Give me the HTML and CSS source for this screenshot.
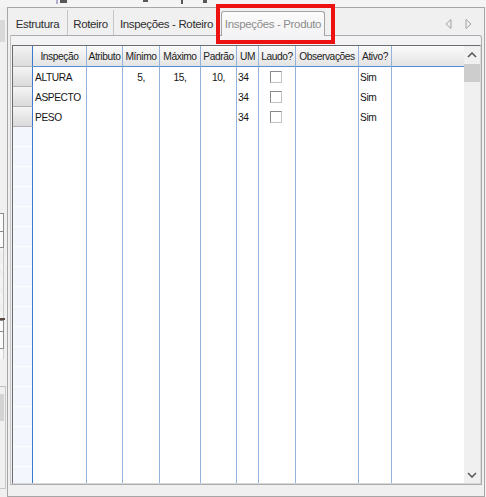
FILE: index.html
```html
<!DOCTYPE html>
<html>
<head>
<meta charset="utf-8">
<link rel="stylesheet" href="styles.css">
</head>
<body>
<div class="screen">
  <div class="topfrag">
    <span class="frag f1"></span>
    <span class="frag f2"></span>
    <span class="frag f3"></span>
    <span class="frag f4"></span>
    <span class="frag f5"></span>
  </div>
  <div class="content">
    <aside class="leftstrip">
      <div class="ls ls-gap13"></div>
      <div class="ls ls-block"></div>
      <div class="ls ls-gap171"></div>
      <div class="ls ls-box ls-h19"></div>
      <div class="ls ls-box ls-h16"></div>
      <div class="ls ls-dots"></div>
      <div class="ls ls-dark"></div>
      <div class="ls ls-box ls-h12"></div>
      <div class="ls ls-box ls-h17"></div>
      <div class="ls ls-light"></div>
      <div class="ls ls-gap27"></div>
      <div class="ls ls-lower">
        <div class="ls-gray"></div>
      </div>
    </aside>
    <div class="frame">
      <div class="tabstrip">
        <div class="tab t1">Estrutura</div>
        <div class="tab t2">Roteiro</div>
        <div class="tab t3">Inspeções - Roteiro</div>
        <div class="tab active">Inspeções - Produto</div>
        <div class="arrows">
          <svg width="7" height="10" viewBox="0 0 7 10"><polygon points="6,0.5 6,9.5 1,5" fill="none" stroke="#a2a2a2" stroke-width="1"/></svg>
          <svg width="7" height="10" viewBox="0 0 7 10"><polygon points="1,0.5 1,9.5 6,5" fill="none" stroke="#a2a2a2" stroke-width="1"/></svg>
        </div>
      </div>
      <div class="tabbody">
        <div class="grid">
          <div class="hcell corner"></div>
          <div class="hcell">Inspeção</div>
          <div class="hcell">Atributo</div>
          <div class="hcell">Mínimo</div>
          <div class="hcell">Máximo</div>
          <div class="hcell">Padrão</div>
          <div class="hcell">UM</div>
          <div class="hcell">Laudo?</div>
          <div class="hcell">Observações</div>
          <div class="hcell">Ativo?</div>
          <div class="hcell hlast"></div>
          <div class="scroll">
            <div class="sbtn up"><svg width="10" height="6" viewBox="0 0 10 6"><polyline points="1,5 5,1 9,5" fill="none" stroke="#5a5a5a" stroke-width="1.6"/></svg></div>
            <div class="thumb"></div>
            <div class="strack"></div>
            <div class="sbtn down"><svg width="10" height="6" viewBox="0 0 10 6"><polyline points="1,1 5,5 9,1" fill="none" stroke="#5a5a5a" stroke-width="1.6"/></svg></div>
          </div>

          <div class="ind"></div>
          <div class="cell first">ALTURA</div>
          <div class="cell"></div>
          <div class="cell num">5,</div>
          <div class="cell num">15,</div>
          <div class="cell num">10,</div>
          <div class="cell">34</div>
          <div class="cell chk"><span class="box"></span></div>
          <div class="cell"></div>
          <div class="cell">Sim</div>
          <div class="cell last"></div>

          <div class="ind"></div>
          <div class="cell first">ASPECTO</div>
          <div class="cell"></div>
          <div class="cell num"></div>
          <div class="cell num"></div>
          <div class="cell num"></div>
          <div class="cell">34</div>
          <div class="cell chk"><span class="box"></span></div>
          <div class="cell"></div>
          <div class="cell">Sim</div>
          <div class="cell last"></div>

          <div class="ind"></div>
          <div class="cell first">PESO</div>
          <div class="cell"></div>
          <div class="cell num"></div>
          <div class="cell num"></div>
          <div class="cell num"></div>
          <div class="cell">34</div>
          <div class="cell chk"><span class="box"></span></div>
          <div class="cell"></div>
          <div class="cell">Sim</div>
          <div class="cell last"></div>

          <div class="ind fill"></div>
          <div class="cell"></div>
          <div class="cell"></div>
          <div class="cell"></div>
          <div class="cell"></div>
          <div class="cell"></div>
          <div class="cell"></div>
          <div class="cell"></div>
          <div class="cell"></div>
          <div class="cell"></div>
          <div class="cell last"></div>
        </div>
      </div>
    </div>
  </div>
  <div class="highlight"></div>
</div>
</body>
</html>
```

FILE: styles.css
```css
* { box-sizing: border-box; }
html, body { margin: 0; padding: 0; }
body {
  width: 486px;
  height: 497px;
  overflow: hidden;
  background: #f0f0f0;
  font-family: "Liberation Sans", Arial, sans-serif;
}
.screen {
  position: relative;
  width: 486px;
  height: 497px;
  background: #f0f0f0;
}

/* top fragments of controls cut by the screenshot */
.topfrag {
  height: 7px;
  display: flex;
  align-items: flex-start;
  background: #f4f4f4;
}
.frag { display: block; height: 3px; background: #575757; }
.f1 { margin-left: 56px; width: 2px; background: #b3acd0; height: 4px; }
.f2 { margin-left: 2px; width: 7px; }
.f3 { margin-left: 76px; width: 5px; height: 2px; }
.f4 { margin-left: 33px; width: 2px; height: 4px; }
.f5 { margin-left: 20px; width: 4px; height: 3px; }

.content { display: flex; height: 490px; }

/* left cut-off controls */
.leftstrip { width: 7px; display: flex; flex-direction: column; }
.ls { flex: none; width: 100%; }
.ls-gap13 { height: 13px; }
.ls-block { height: 22px; width: 5px; background: #d9d9d9; }
.ls-gap171 { height: 171px; }
.ls-box { width: 4px; background: #fbfbfb; border: 1px solid #8c8c8c; border-left: none; }
.ls-h19 { height: 19px; }
.ls-h16 { height: 16px; border-top: none; }
.ls-h12 { height: 12px; }
.ls-h17 { height: 17px; border-top: none; }
.ls-dots {
  height: 70px; width: 4px;
  background: repeating-linear-gradient(45deg, #f7f7f7 0 1px, #ececec 1px 2px);
  border-right: 1px solid #c8c8c8;
}
.ls-dark { height: 2px; width: 5px; background: #5b4a42; }
.ls-light { height: 10px; width: 4px; background: #f8f8f8; border-right: 1px solid #d0d0d0; }
.ls-gap27 { height: 27px; }
.ls-lower {
  height: 103px; width: 6px;
  border-top: 1px solid #c0c0c0;
  border-right: 1px solid #c8c8c8;
  border-bottom: 1px solid #c8c8c8;
  padding-top: 7px;
}
.ls-gray { height: 27px; width: 4px; background: #d3d3d3; }

/* tab control frame */
.frame {
  width: 478px;
  height: 490px;
  border: 1px solid #a6a6a6;
  background: #f0f0f0;
  display: flex;
  flex-direction: column;
}
.tabstrip {
  flex: none;
  height: 27px;
  display: flex;
  align-items: flex-end;
  font-size: 11.5px;
  letter-spacing: -0.35px;
  color: #2e2e2e;
}
.tab {
  height: 25px;
  line-height: 28px;
  text-align: center;
  white-space: nowrap;
  border-right: 1px solid #c6c6c6;
}
.t1 { width: 60px; }
.t2 { width: 46px; }
.t3 { width: 106px; }
.tab.active {
  position: relative;
  z-index: 1;
  width: 104px;
  height: 25px;
  margin-left: 1px;
  margin-bottom: -1px;
  line-height: 25px;
  color: #8d8d8d;
  border: 1px solid #a3a3a3;
  border-bottom: none;
  border-radius: 3px 3px 0 0;
  background: linear-gradient(#fbfbfb, #f3f3f5);
}
.arrows {
  margin-left: auto;
  align-self: center;
  margin-top: 4px;
  display: flex;
  gap: 13px;
  padding-right: 12px;
}
.arrows svg { display: block; }

.tabbody {
  flex: none;
  height: 450px;
  margin-left: 2px;
  margin-right: 2px;
  border: 1px solid #ababab;
  border-left-color: #c4c4c4;
  border-radius: 0 3px 0 0;
  background: #f3f3f6;
  padding-top: 9px;
  padding-left: 1px;
}

/* data grid */
.grid {
  width: 469px;
  height: 439px;
  border-top: 1px solid #6c6c6c;
  border-left: 1px solid #6c6c6c;
  border-right: 1px solid #d8d8d8;
  border-bottom: 1px solid #d8d8d8;
  background: #ffffff;
  display: grid;
  grid-template-columns: 20px 54px 36px 37px 41px 36px 22px 37px 63px 33px 72px 16px;
  grid-template-rows: 21px 20px 20px 20px 1fr;
  font-size: 10.2px;
  letter-spacing: -0.4px;
  color: #151515;
}
.hcell {
  background: linear-gradient(#fbfbfb, #e3e3e3);
  border-right: 1px solid #93b3dc;
  border-bottom: 1px solid #5a8ed4;
  text-align: center;
  line-height: 22px;
  color: #222;
  white-space: nowrap;
  overflow: hidden;
}
.hcell.corner {
  background: linear-gradient(#f3f3f3, #dcdcdc);
  border-right: 1px solid #3b78d0;
  border-bottom: 1px solid #b9b9b9;
}
.hcell.hlast { border-right: none; }

.scroll {
  grid-column: 12;
  grid-row: 1 / 6;
  background: #f0f0f0;
  display: flex;
  flex-direction: column;
}
.sbtn { flex: none; display: flex; align-items: center; justify-content: center; }
.sbtn svg { display: block; }
.sbtn.up { height: 18px; }
.thumb { flex: none; height: 18px; background: #cdcdcd; }
.strack { flex: 1; }
.sbtn.down { height: 17px; }

.ind {
  background: linear-gradient(#f5f5f5, #dadada);
  border-right: 1px solid #3b78d0;
  border-bottom: 1px solid #b4b4b4;
}
.ind.fill {
  border-bottom: none;
  background: repeating-linear-gradient(#f3f7fd 0 19px, #ffffff 19px 20px);
}
.cell {
  border-right: 1px solid #93b3dc;
  line-height: 22px;
  padding-left: 1px;
  white-space: nowrap;
  overflow: hidden;
}
.cell.first { padding-left: 2px; }
.cell.num { text-align: center; padding-left: 0; }
.cell.last { border-right: none; }
.cell.chk { padding-left: 11px; padding-top: 4px; line-height: 0; }
.box {
  display: inline-block;
  width: 12px;
  height: 12px;
  background: #fff;
  border: 1px solid #8a8a8a;
  border-right-color: #c2c2c2;
  border-bottom-color: #c2c2c2;
}

/* annotation overlay */
.highlight {
  position: absolute;
  left: 216px;
  top: 4px;
  width: 119px;
  height: 40px;
  border: 4px solid #ee1111;
}
```
